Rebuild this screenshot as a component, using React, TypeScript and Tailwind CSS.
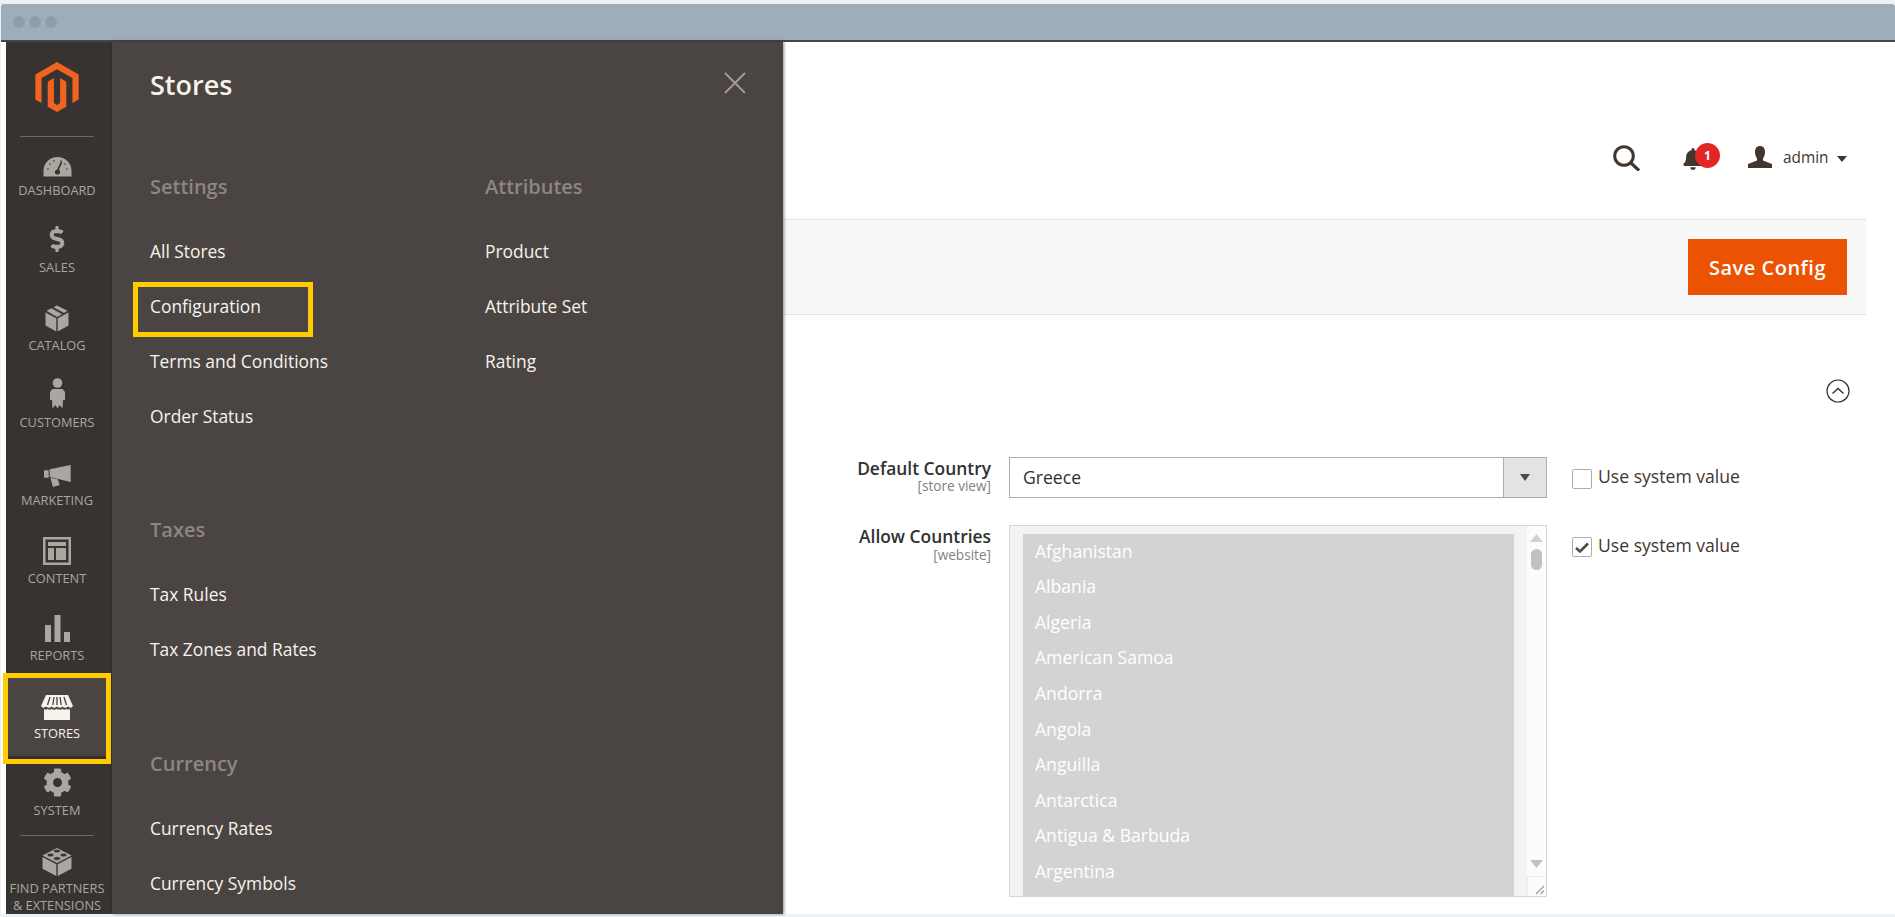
import { SiMagento } from 'react-icons/si';
import { FaBell, FaCog, FaDollarSign } from 'react-icons/fa';

const font = { fontFamily: '"Open Sans", sans-serif' };

function Gauge() {
  return (
    <svg width="29" height="21" viewBox="0 0 29 21">
      <path d="M0.5 20.5 V15 A14 14 0 0 1 28.5 15 V20.5 Z" fill="#aaa6a0" />
      <path d="M14.5 15 L18.5 6" stroke="#373330" strokeWidth="1.8" />
      <circle cx="14.5" cy="16" r="2.6" fill="#373330" />
      {[[5, 13], [7, 8], [11, 5], [18, 5], [22, 8], [24, 13]].map(([x, y]) => (
        <circle key={x} cx={x} cy={y} r="0.8" fill="#373330" />
      ))}
    </svg>
  );
}

function BoxIcon() {
  return (
    <svg width="24" height="27" viewBox="0 0 24 27">
      <path d="M0.5 7.5 L11.3 13.2 V26.5 L0.5 20.5 Z" fill="#aaa6a0" />
      <path d="M23.5 7.5 L12.7 13.2 V26.5 L23.5 20.5 Z" fill="#aaa6a0" />
      <path d="M1.5 5.8 L6.5 3.2 L17.2 9.2 L12 12 Z" fill="#aaa6a0" />
      <path d="M8.5 2.2 L12 0.5 L22.5 5.8 L19 8 Z" fill="#aaa6a0" />
    </svg>
  );
}

function PersonIcon() {
  return (
    <svg width="15" height="31" viewBox="0 0 15 31">
      <circle cx="7.5" cy="5" r="4.8" fill="#aaa6a0" />
      <path d="M2.5 11 H12.5 L15 14 V22 H13 L12.5 30.5 L9.5 27 L7.5 30.5 L5.5 27 L2.5 30.5 L2 22 H0 V14 Z" fill="#aaa6a0" />
    </svg>
  );
}

function HornIcon() {
  return (
    <svg width="27" height="22" viewBox="0 0 27 22">
      <path d="M1 5.3 H4.7 V12.7 H1 Q0 12.7 0 11.7 V6.3 Q0 5.3 1 5.3 Z" fill="#aaa6a0" />
      <path d="M5.7 4.3 L26.7 0 V17 L5.7 12 Z" fill="#aaa6a0" />
      <path d="M6.3 12.7 L9 22 L15.7 20 L13.7 14.3 Z" fill="#aaa6a0" />
    </svg>
  );
}

function ContentIcon() {
  return (
    <svg width="28" height="28" viewBox="0 0 28 28">
      <path fillRule="evenodd" d="M0 0 H28 V28 H0 Z M2.5 2.5 V25.5 H25.5 V2.5 Z" fill="#aaa6a0" />
      <path d="M5 5 H23 V9 H5 Z M5 11 H11 V23 H5 Z M13 11 H23 V23 H13 Z" fill="#aaa6a0" />
    </svg>
  );
}

function BarsIcon() {
  return (
    <svg width="25" height="27" viewBox="0 0 25 27">
      <path d="M0 10 H6 V27 H0 Z M9.5 0 H15.5 V27 H9.5 Z M19 17 H25 V27 H19 Z" fill="#aaa6a0" />
    </svg>
  );
}

function StoreIcon() {
  return (
    <svg width="32" height="25" viewBox="0 0 32 25">
      <path d="M5 0 H27 L32 11 Q30 14 27 11.5 Q24 14 21.5 11.5 Q19 14 16 11.5 Q13 14 10.5 11.5 Q8 14 5 11.5 Q2 14 0 11 Z" fill="#f7f3eb" />
      <path d="M9 2 L6.5 10 M13 2 L11.8 10 M16 2 V10 M19 2 L20.2 10 M23 2 L25.5 10" stroke="#4a4542" strokeWidth="1.3" />
      <path d="M3 14 Q5 15 6.5 14 Q8.5 15.5 10.5 14 Q13 15.5 16 14 Q19 15.5 21.5 14 Q23.5 15.5 25.5 14 Q27 15 29 14 V25 H3 Z" fill="#f7f3eb" />
    </svg>
  );
}

function BrickIcon() {
  return (
    <svg width="30" height="29" viewBox="0 0 30 29">
      <path d="M15 1 L29.5 8.5 L15 16 L0.5 8.5 Z" fill="#aaa6a0" />
      <path d="M0.5 10 L14.3 17.2 V29 L0.5 21.8 Z" fill="#aaa6a0" />
      <path d="M29.5 10 L15.7 17.2 V29 L29.5 21.8 Z" fill="#aaa6a0" />
      {[[15, 4], [8.5, 8], [21.5, 8], [15, 11.5]].map(([x, y]) => (
        <ellipse key={x * y} cx={x} cy={y} rx="3.4" ry="1.8" fill="#373330" stroke="#aaa6a0" strokeWidth="0.6" />
      ))}
    </svg>
  );
}

const navItems = [
  { label: 'DASHBOARD', icon: <Gauge /> },
  { label: 'SALES', icon: <FaDollarSign size={26} color="#aaa6a0" className="mb-[2px]" /> },
  { label: 'CATALOG', icon: <BoxIcon /> },
  { label: 'CUSTOMERS', icon: <PersonIcon /> },
  { label: 'MARKETING', icon: <HornIcon /> },
  { label: 'CONTENT', icon: <ContentIcon /> },
  { label: 'REPORTS', icon: <BarsIcon /> },
  { label: 'STORES', icon: <StoreIcon />, active: true },
  { label: 'SYSTEM', icon: <FaCog size={29} color="#aaa6a0" /> },
];

function Sidebar() {
  return (
    <div className="w-[106px] shrink-0 bg-[#373330] flex flex-col items-center pr-[4px]">
      <div className="h-[95px] w-[74px] shrink-0 border-b border-[#6d6761] flex justify-center pt-[20px]">
        <SiMagento size={50} color="#f26322" />
      </div>
      <div className="w-full flex flex-col">
        {navItems.map((item) =>
          item.active ? (
            <div key={item.label} className="relative h-[77.6px] flex flex-col items-center justify-end pb-[16px] text-[#f7f3eb]">
              <div className="absolute left-[2px] right-[-3px] top-[-2px] bottom-[-2px] bg-[#4a4542] border-b-4 border-[#35302d]" />
              <div className="relative h-[32px] flex items-end justify-center">{item.icon}</div>
              <div className="relative mt-[4px] text-[12.8px] leading-[18px]">{item.label}</div>
              <div className="absolute left-[-3px] right-[-3px] top-[-7px] bottom-[-6px] border-[5px] border-[#ffcc00]" />
            </div>
          ) : (
            <div key={item.label} className="h-[77.6px] flex flex-col items-center justify-end pb-[16px] text-[#aaa6a0]">
              <div className="h-[32px] flex items-end justify-center">{item.icon}</div>
              <div className="mt-[4px] text-[12.8px] leading-[18px]">{item.label}</div>
            </div>
          )
        )}
        <div className="flex flex-col items-center text-[#aaa6a0]">
          <div className="w-[74px] border-t border-[#6d6761] mb-[11px]" />
          <BrickIcon />
          <div className="mt-[4px] text-[12.8px] leading-[17px] text-center whitespace-nowrap">
            FIND PARTNERS
            <br />& EXTENSIONS
          </div>
        </div>
      </div>
    </div>
  );
}

function MenuHead({ children, top }: { children: string; top: string }) {
  return <div className={`text-[20px] leading-[28px] font-semibold text-[#8e8680] ${top}`}>{children}</div>;
}

function MenuLink({ children, boxed }: { children: string; boxed?: boolean }) {
  return (
    <div className="relative h-[55px] flex items-center text-[17.4px] text-[#f7f3eb]">
      {children}
      {boxed && <div className="absolute left-[-17px] top-[3px] w-[180px] h-[55px] border-[5px] border-[#ffcc00]" />}
    </div>
  );
}

function StoresPanel() {
  return (
    <div className="w-[671px] shrink-0 bg-[#4a4542] flex flex-col pl-[38px] relative shadow-[1px_0_3px_rgba(0,0,0,0.45)]">
      <div className="flex items-center justify-between pt-[25px] pr-[37px]">
        <div className="text-[27px] leading-[36px] font-semibold text-[#f7f3eb]">Stores</div>
        <svg width="22" height="22" viewBox="0 0 22 22" className="mt-[-4px]">
          <path d="M1 1 L21 21 M21 1 L1 21" stroke="#a79d95" strokeWidth="1.8" />
        </svg>
      </div>
      <div className="flex">
        <div className="w-[335px]">
          <MenuHead top="mt-[70px] mb-[23px]">Settings</MenuHead>
          <MenuLink>All Stores</MenuLink>
          <MenuLink boxed>Configuration</MenuLink>
          <MenuLink>Terms and Conditions</MenuLink>
          <MenuLink>Order Status</MenuLink>
          <MenuHead top="mt-[72px] mb-[23px]">Taxes</MenuHead>
          <MenuLink>Tax Rules</MenuLink>
          <MenuLink>Tax Zones and Rates</MenuLink>
          <MenuHead top="mt-[73px] mb-[23px]">Currency</MenuHead>
          <MenuLink>Currency Rates</MenuLink>
          <MenuLink>Currency Symbols</MenuLink>
        </div>
        <div>
          <MenuHead top="mt-[70px] mb-[23px]">Attributes</MenuHead>
          <MenuLink>Product</MenuLink>
          <MenuLink>Attribute Set</MenuLink>
          <MenuLink>Rating</MenuLink>
        </div>
      </div>
    </div>
  );
}

function HeaderBar() {
  return (
    <div className="h-[177px] flex items-start pt-[103px] text-[#41362f]">
      <svg width="27" height="26" viewBox="0 0 27 26" className="ml-[830px]">
        <circle cx="11" cy="11" r="9.3" fill="none" stroke="#41362f" strokeWidth="3" />
        <path d="M18 18 L26 25.5" stroke="#41362f" strokeWidth="3.2" />
      </svg>
      <div className="relative ml-[42px] mt-[3px]">
        <FaBell size={22} color="#41362f" />
        <div className="absolute left-[13px] top-[-5px] w-[25px] h-[25px] rounded-full bg-[#e22626] text-white text-[12px] font-bold flex items-center justify-center">1</div>
      </div>
      <svg width="24" height="22" viewBox="0 0 24 22" className="ml-[44px] mt-[1px]">
        <path d="M7 6 C7 2 9 0 12 0 C15 0 17 2 17 6 C17 9 16 11 15 12.5 V14.5 L24 18 V22 H0 V18 L9 14.5 V12.5 C8 11 7 9 7 6 Z" fill="#41362f" />
      </svg>
      <div className="ml-[11px] text-[15.4px] leading-[24px] mt-[1px]">admin</div>
      <svg width="10" height="6" viewBox="0 0 10 6" className="ml-[8px] mt-[11px]">
        <path d="M0 0 H10 L5 6 Z" fill="#41362f" />
      </svg>
    </div>
  );
}

function Toolbar() {
  return (
    <div className="w-[1083px] h-[96px] bg-[#f8f8f8] border-y border-[#e3e3e3] flex justify-end items-center pr-[19px]">
      <div className="w-[159px] h-[56px] pt-[1px] bg-[#eb5202] text-white text-[20px] font-semibold flex items-center justify-center tracking-[0.5px]">
        Save Config
      </div>
    </div>
  );
}

const countries = ['Afghanistan', 'Albania', 'Algeria', 'American Samoa', 'Andorra', 'Angola', 'Anguilla', 'Antarctica', 'Antigua & Barbuda', 'Argentina'];

function Checkbox({ checked }: { checked?: boolean }) {
  return (
    <div className="w-[20px] h-[20px] border border-[#adadad] rounded-[2px] bg-white flex items-center justify-center">
      {checked && (
        <svg width="14" height="11" viewBox="0 0 14 11">
          <path d="M1 6 L5 9.5 L13 1.5" fill="none" stroke="#514943" strokeWidth="2.6" />
        </svg>
      )}
    </div>
  );
}

function FormArea() {
  return (
    <div className="flex flex-col text-[#303030]">
      <div className="flex justify-end w-[1083px] pr-[16px] pt-[64px] h-[142px]">
        <svg width="24" height="24" viewBox="0 0 24 24">
          <circle cx="12" cy="12" r="11" fill="none" stroke="#303030" strokeWidth="1.2" />
          <path d="M6.5 14.5 L12 9.5 L17.5 14.5" fill="none" stroke="#303030" strokeWidth="1.4" />
        </svg>
      </div>
      <div className="flex h-[68px]">
        <div className="w-[208px] text-right">
          <div className="text-[17.4px] leading-[22px] font-semibold">Default Country</div>
          <div className="text-[13.6px] leading-[14px] text-[#808080]">[store view]</div>
        </div>
        <div className="ml-[18px] w-[538px] h-[41px] border border-[#adadad] bg-white flex items-stretch">
          <div className="flex-1 pl-[13px] flex items-center text-[17.6px]">Greece</div>
          <div className="w-[43px] bg-[#e3e3e3] border-l border-[#adadad] flex items-center justify-center">
            <svg width="10" height="7" viewBox="0 0 10 7">
              <path d="M0 0 H10 L5 7 Z" fill="#514943" />
            </svg>
          </div>
        </div>
        <div className="ml-[25px] flex items-start pt-[8px]">
          <div className="mt-[4px]"><Checkbox /></div>
          <div className="ml-[6px] text-[17.6px] leading-[23px] text-[#41362f]">Use system value</div>
        </div>
      </div>
      <div className="flex">
        <div className="w-[208px] text-right">
          <div className="text-[17.4px] leading-[22px] font-semibold">Allow Countries</div>
          <div className="text-[13.6px] leading-[16px] text-[#808080]">[website]</div>
        </div>
        <div className="ml-[18px] w-[538px] h-[372px] border border-[#d6d6d6] bg-[#f3f3f3] flex overflow-hidden">
          <div className="ml-[13px] mt-[8px] w-[491px] bg-[#d3d3d3] text-white text-[17.6px] pl-[12px]">
            {countries.map((c) => (
              <div key={c} className="h-[35.6px] pb-[2px] flex items-center">{c}</div>
            ))}
          </div>
          <div className="ml-[13px] w-[19px] bg-[#fcfcfc] flex flex-col items-center pt-[8px]">
            <svg width="13" height="8" viewBox="0 0 13 8"><path d="M0 8 H13 L6.5 0 Z" fill="#d0d0d0" /></svg>
            <div className="w-[11px] h-[21px] rounded-full bg-[#c1c1c1] mt-[7px]" />
            <div className="flex-1" />
            <svg width="13" height="8" viewBox="0 0 13 8"><path d="M0 0 H13 L6.5 8 Z" fill="#c1c1c1" /></svg>
            <div className="w-full h-[20px] mt-[8px] border-t border-l border-[#ececec] flex items-end justify-end pr-[1px] pb-[1px]">
              <svg width="10" height="10" viewBox="0 0 10 10">
                <path d="M1 9 L9 1 M5.5 9 L9 5.5" stroke="#9a9a9a" strokeWidth="1.1" />
              </svg>
            </div>
          </div>
        </div>
        <div className="ml-[25px] flex items-start pt-[9px]">
          <div className="mt-[3px]"><Checkbox checked /></div>
          <div className="ml-[6px] text-[17.6px] leading-[23px] text-[#41362f]">Use system value</div>
        </div>
      </div>
    </div>
  );
}

export default function App() {
  return (
    <div className="w-[1895px] h-[917px] bg-[#eef2f5] pt-[4px] pl-[1px] overflow-hidden flex flex-col" style={font}>
      <div className="h-[38px] shrink-0 w-full bg-[#9eadba] rounded-t-[3px] flex items-center pl-[12px] gap-[4px] border-b-2 border-[#4a4542]">
        <div className="w-[12px] h-[12px] rounded-full bg-[#8c9fae]" />
        <div className="w-[12px] h-[12px] rounded-full bg-[#8c9fae]" />
        <div className="w-[12px] h-[12px] rounded-full bg-[#8c9fae]" />
      </div>
      <div className="h-[872px] shrink-0 flex bg-white pl-[5px]">
        <Sidebar />
        <StoresPanel />
        <div className="flex-1 flex flex-col">
          <HeaderBar />
          <Toolbar />
          <FormArea />
        </div>
      </div>
    </div>
  );
}
